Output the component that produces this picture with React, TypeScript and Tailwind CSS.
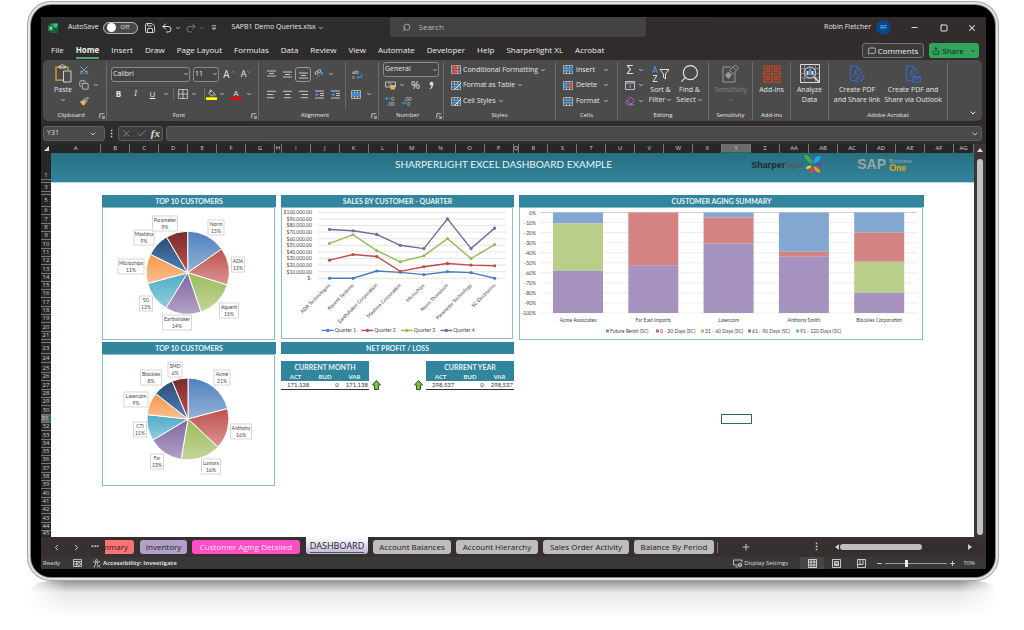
import type { ReactNode } from 'react';
import {
  AlignCenter,
  AlignLeft,
  AlignRight,
  Check,
  ChevronDown,
  ChevronLeft,
  ChevronRight,
  Copy,
  Eraser,
  MessageSquare,
  Minus,
  Plus,
  Redo2,
  Save,
  Scissors,
  Search,
  Share,
  Square,
  Undo2,
  X,
} from 'lucide-react';

/* ---------- data ---------- */

const menu = [
  'File',
  'Home',
  'Insert',
  'Draw',
  'Page Layout',
  'Formulas',
  'Data',
  'Review',
  'View',
  'Automate',
  'Developer',
  'Help',
  'Sharperlight XL',
  'Acrobat',
];

const columns =
  'A B C D E F G H I J K L M N O P Q R S T U V W X Y Z AA AB AC AD AE AF AG'.split(
    ' '
  );

interface Slice {
  name: string;
  pct: string;
  value: number;
  x: number;
  y: number;
  w: number;
}

// x / y is the centre of the callout
const topCustomers: Slice[] = [
  { name: 'Norm', pct: '15%', value: 15.3, x: 216, y: 228, w: 16 },
  { name: 'ADA', pct: '15%', value: 14.5, x: 238, y: 265, w: 13 },
  { name: 'Aquent', pct: '15%', value: 15, x: 229, y: 311, w: 19 },
  { name: 'Earthshaker', pct: '14%', value: 14, x: 177, y: 323, w: 29 },
  { name: 'SG', pct: '12%', value: 12, x: 146, y: 304, w: 13 },
  { name: 'Microchips', pct: '11%', value: 11.5, x: 131, y: 267, w: 26 },
  { name: 'Mashina', pct: '9%', value: 9.2, x: 144, y: 238, w: 20 },
  { name: 'Parameter', pct: '9%', value: 8.5, x: 165, y: 224, w: 25 },
];

const topVendors: Slice[] = [
  { name: 'Acme', pct: '21%', value: 20.9, x: 222, y: 378, w: 16 },
  { name: 'Anthony', pct: '16%', value: 16.1, x: 241, y: 432, w: 21 },
  { name: 'Lumarx', pct: '16%', value: 15.7, x: 211, y: 467, w: 19 },
  { name: 'Far', pct: '13%', value: 13.7, x: 157, y: 462, w: 13 },
  { name: 'CTI', pct: '11%', value: 10.3, x: 140, y: 430, w: 13 },
  { name: 'Lasercom', pct: '9%', value: 8.9, x: 136, y: 400, w: 24 },
  { name: 'Blockies', pct: '8%', value: 8.1, x: 151, y: 378, w: 21 },
  { name: 'SMD', pct: '6%', value: 6.3, x: 175, y: 370, w: 14 },
];

const pieColors = [
  ['#4f81bd', '#95b3d7'],
  ['#c0504d', '#d99694'],
  ['#9bbb59', '#c3d69b'],
  ['#8064a2', '#b3a2c7'],
  ['#4bacc6', '#93cddd'],
  ['#f79646', '#fac090'],
  ['#2c4d75', '#4f81bd'],
  ['#772c2a', '#c0504d'],
];

const salesNames = [
  'ADA Technologies',
  'Aquent Systems',
  'Earthshaker Corporation',
  'Mashina Corporation',
  'Microchips',
  'Norm Thompson',
  'Parameter Technology',
  'SG Electronics',
];

const quarters = [
  { color: '#4a7ebb', data: [0, 0, 11, 9, 5.5, 10, 8.5, 0] },
  { color: '#be4b48', data: [27.5, 36, 33, 10.5, 17.5, 22.5, 20, 19] },
  { color: '#98b954', data: [53, 66, 42, 25, 34, 60, 30, 51] },
  { color: '#7d60a0', data: [74, 72, 66.5, 50, 45, 90, 45, 76] },
];

const BLUE = '#84a7d2';
const RED = '#d38381';
const GREEN = '#b9ce88';
const PURPLE = '#a592bf';

const aging = [
  {
    name: 'Acme Associates',
    parts: [
      [11, BLUE],
      [47, GREEN],
      [42, PURPLE],
    ],
  },
  {
    name: 'Far East Imports',
    parts: [
      [53, RED],
      [47, PURPLE],
    ],
  },
  {
    name: 'Lasercom',
    parts: [
      [5, BLUE],
      [26, RED],
      [69, PURPLE],
    ],
  },
  {
    name: 'Anthony Smith',
    parts: [
      [39, BLUE],
      [5, RED],
      [56, PURPLE],
    ],
  },
  {
    name: 'Blockies Corporation',
    parts: [
      [20, BLUE],
      [29, RED],
      [31, GREEN],
      [20, PURPLE],
    ],
  },
] as { name: string; parts: [number, string][] }[];

const agingLegend = [
  { label: 'Future Remit (SC)', color: '#6b96cb', x: 606 },
  { label: '0 - 30 Days (SC)', color: '#cc6664', x: 656 },
  { label: '31 - 60 Days (SC)', color: '#a9c56f', x: 701 },
  { label: '61 - 90 Days (SC)', color: '#9078b2', x: 748 },
  { label: '91 - 120 Days (SC)', color: '#63b8d2', x: 796 },
];

/* ---------- small pieces ---------- */

function Chev({ className = '' }: { className?: string }) {
  return (
    <span className={`flex shrink-0 items-center justify-center ${className}`}>
      <ChevronDown className="size-[6px]" strokeWidth={3} />
    </span>
  );
}

function Tool({
  label,
  className = 'w-4',
  children,
}: {
  label: string;
  className?: string;
  children: ReactNode;
}) {
  return (
    <button
      type="button"
      aria-label={label}
      className={`flex shrink-0 items-center justify-center ${className}`}
    >
      {children}
    </button>
  );
}

function Group({
  label,
  launcher,
  className,
  children,
}: {
  label: string;
  launcher?: boolean;
  className: string;
  children: ReactNode;
}) {
  return (
    <section className={`flex shrink-0 flex-col ${className}`}>
      <div className="flex h-[47px] border-r border-[#6c6c6c]">{children}</div>
      <div className="flex h-[11px] items-end border-r border-[#6c6c6c] text-[6px] leading-[9px]">
        <span className="flex-1 text-center whitespace-nowrap">{label}</span>
        {launcher && (
          <svg viewBox="0 0 8 8" className="mr-px mb-px size-[6px]">
            <path d="M1 7V1h6M3.5 3.5 7 7M7 4v3H4" fill="none" stroke="#ddd" />
          </svg>
        )}
      </div>
    </section>
  );
}

function BigButton({
  icon,
  lines,
  className,
  chevron,
}: {
  icon: ReactNode;
  lines: string[];
  className: string;
  chevron?: boolean;
}) {
  return (
    <button
      type="button"
      className={`flex shrink-0 flex-col items-center text-[7px] leading-[10px] whitespace-nowrap ${className}`}
    >
      <span className="flex h-[23px] items-center">{icon}</span>
      <span>{lines[0]}</span>
      <span className="flex h-[10px] items-center gap-px">
        {lines[1]}
        {chevron && <Chev />}
      </span>
    </button>
  );
}

function TableIcon({ kind }: { kind: string }) {
  return (
    <svg viewBox="0 0 20 18" className="h-[9px] w-[10px] shrink-0">
      <path
        d="M1 1h18v16H1zM1 6h18M1 12h18M7 1v16M13 1v16"
        fill="none"
        stroke="#c9c9c9"
        strokeWidth="1.5"
      />
      {kind === 'cond' && (
        <path d="M3 1h9v5H3zM6 7h7v4H6zM3 12h9v5H3z" fill="#e8403a" />
      )}
      {kind === 'format' && <path d="M7 6h12v3l-9 8H7z" fill="#2f8fdd" />}
      {kind === 'cell' && <path d="M4 5h12v4l-8 8H4z" fill="#2f8fdd" />}
      {(kind === 'format' || kind === 'cell') && (
        <path d="M19 5 9 15l-3 2" stroke="#eee" strokeWidth="2" fill="none" />
      )}
      {kind === 'insert' && (
        <path d="M7 5h13v8H7zM0 9l5-4v8z" fill="#2f8fdd" />
      )}
      {kind === 'delete' && <path d="M2 5h9v8H2z" fill="#2f8fdd" />}
      {kind === 'delete' && (
        <path d="m11 5 8 8m0-8-8 8" stroke="#e8403a" strokeWidth="2.5" />
      )}
      {kind === 'fmt' && <path d="M5 5h10v8H5z" fill="#2f8fdd" />}
      {kind === 'merge' && <path d="M2 6h16v6H2z" fill="#2f8fdd" />}
    </svg>
  );
}

function PdfIcon({ mail }: { mail?: boolean }) {
  return (
    <svg
      viewBox="0 0 20 22"
      className="h-[18px] w-4"
      fill="none"
      stroke="#3569c8"
      strokeWidth="1.3"
    >
      <path d="M9 19H3.5A1.5 1.5 0 0 1 2 17.5v-15A1.5 1.5 0 0 1 3.5 1H10l5 5v5M10 1v5h5" />
      <path d="M4.500 14c3-1 5-5 4-7-.8-1-2 1 0 3 1 1.300 2.500 2 4.500 2" />
      {mail ? (
        <path d="M10 14h9v7h-9zl4.5 4 4.5-4" />
      ) : (
        <path d="m12 20-1 .8a2 2 0 0 1-2.5-3l2-1.800a2 2 0 0 1 3 .3m.5-1.300 1.500-1.500a2 2 0 0 1 3 2.800l-2.300 2.200a2 2 0 0 1-2.700-.2" />
      )}
    </svg>
  );
}

/* ---------- title bar, menu, ribbon ---------- */

function TitleBar() {
  return (
    <header className="flex h-[21px] items-center text-[7px] text-[#e4e4e4]">
      <div className="flex flex-1 items-center">
        <svg viewBox="0 0 20 20" className="ml-[7px] size-[10px]">
          <path d="M5 1h14v18H5z" fill="#21a366" />
          <path d="M12 1h7v6h-7z" fill="#33c481" />
          <path d="M5 10h14v9H5z" fill="#185c37" />
          <path d="M0 5h11v11H0z" fill="#107c41" />
          <path d="m3 7.5 5 6m0-6-5 6" stroke="#fff" strokeWidth="1.8" />
        </svg>
        <label className="ml-[10px] flex items-center gap-1 whitespace-nowrap">
          AutoSave
          <input type="checkbox" className="peer sr-only" />
          <span className="flex h-3 w-[35px] items-center rounded-full border border-[#b9b9b9] bg-[#4a4a4a] pl-[3px] text-[6px]">
            <span className="mr-[5px] size-[9px] rounded-full bg-white" />
            Off
          </span>
        </label>
        <Tool label="Save" className="ml-[6px] w-3">
          <Save className="size-3" strokeWidth={1.75} />
        </Tool>
        <Tool label="Undo" className="ml-[5px] w-3">
          <Undo2 className="size-3" strokeWidth={2} />
        </Tool>
        <Chev className="w-[10px]" />
        <Tool label="Redo" className="ml-[2px] w-3 text-[#777]">
          <Redo2 className="size-3" strokeWidth={2} />
        </Tool>
        <Chev className="w-[10px] text-[#777]" />
        <svg
          viewBox="0 0 8 8"
          className="ml-1 size-[6px]"
          fill="none"
          stroke="#ddd"
        >
          <path d="M1 1h6M1.5 4 4 6.5 6.5 4z" />
        </svg>
        <span className="ml-[15px] whitespace-nowrap">
          SAPB1 Demo Queries.xlsx
        </span>
        <Chev className="ml-[2px]" />
      </div>
      <div className="mb-px ml-2 flex h-5 w-[256px] items-center rounded-b-[3px] bg-[#434343] pl-3">
        <Search
          className="size-[9px] -scale-x-100 text-[#bbb]"
          strokeWidth={2}
        />
        <input
          aria-label="Search"
          placeholder="Search"
          className="ml-2 min-w-0 flex-1 bg-transparent text-[8px] outline-none placeholder:text-[#b8b8b8]"
        />
      </div>
      <div className="flex flex-1 items-center justify-end">
        <span>Robin Fletcher</span>
        <span className="ml-[5px] flex size-[15px] items-center justify-center rounded-full bg-[#05498c] text-[6px] text-[#8fc0f0]">
          RF
        </span>
        <Tool label="Minimize" className="ml-[18px] w-[10px]">
          <Minus className="size-[9px]" strokeWidth={2.5} />
        </Tool>
        <Tool label="Restore" className="ml-5 w-[10px]">
          <Square className="size-2" strokeWidth={3} />
        </Tool>
        <Tool label="Close" className="mr-[9px] ml-[18px] w-[10px]">
          <X className="size-[10px]" strokeWidth={2.5} />
        </Tool>
      </div>
    </header>
  );
}

function MenuBar() {
  return (
    <nav className="flex h-[22px] items-center pr-[7px] pl-[10px] text-[8px] text-[#ececec]">
      <div className="flex flex-1 gap-3 pt-1 whitespace-nowrap">
        {menu.map((item) => (
          <a
            key={item}
            href="#"
            className={
              item === 'Home'
                ? 'border-b-2 border-[#4fa573] leading-[14px] font-bold'
                : 'border-b-2 border-transparent leading-[14px]'
            }
          >
            {item}
          </a>
        ))}
      </div>
      <button
        type="button"
        className="mt-[3px] flex h-[15px] w-[62px] items-center justify-center gap-[2px] rounded-[3px] border border-[#747474] bg-[#3c3c3c]"
      >
        <MessageSquare className="size-2" />
        Comments
      </button>
      <button
        type="button"
        className="mt-[3px] ml-[5px] flex h-[15px] w-[50px] items-center justify-center gap-[2px] rounded-[3px] bg-[#33a45c] text-[#0c2415]"
      >
        <Share className="size-2" />
        Share
        <Chev className="ml-1" />
      </button>
    </nav>
  );
}

const lines = (d: string) => (
  <svg
    viewBox="0 0 18 18"
    className="size-[9px]"
    stroke="#d2d2d2"
    strokeWidth="1.8"
  >
    <path d={d} />
  </svg>
);

const indent = (d: string) => (
  <svg
    viewBox="0 0 18 18"
    className="size-[9px]"
    fill="none"
    strokeWidth="1.8"
  >
    <path d="M0 2h18M10 7h8M10 11h8M0 16h18" stroke="#d2d2d2" />
    <path d={d} stroke="#3d9be9" />
  </svg>
);

function Ribbon() {
  return (
    <div className="mr-1 ml-[2px] flex h-[61px] overflow-hidden rounded-[5px] bg-[#4b4b4b] pt-[2px] text-[7px] text-[#e6e6e6]">
      <Group label="Clipboard" launcher className="w-16">
        <BigButton
          className="ml-1 w-8"
          lines={['Paste', '']}
          chevron
          icon={
            <svg
              viewBox="0 0 34 38"
              className="h-[19px] w-[17px]"
              fill="none"
              strokeWidth="2.5"
            >
              <path d="M16 32H2V6h24v6" stroke="#e8a33d" />
              <path
                d="M8 8V4h4c0-4 5-4 5 0h4v4z"
                stroke="#cfcfcf"
                strokeWidth="2"
              />
              <path
                d="M17 14h15v22H17z"
                fill="#4b4b4b"
                stroke="#cfcfcf"
                strokeWidth="2"
              />
            </svg>
          }
        />
        <div className="grid grid-rows-3">
          <Tool label="Cut" className="w-[10px]">
            <Scissors
              className="size-[10px] -rotate-90 text-[#8cc3ee]"
              strokeWidth={1.75}
            />
          </Tool>
          <div className="flex">
            <Tool label="Copy" className="w-[10px]">
              <Copy className="size-[10px]" strokeWidth={1.75} />
            </Tool>
            <Chev className="w-[14px]" />
          </div>
          <Tool label="Format Painter" className="w-[10px]">
            <svg viewBox="0 0 20 20" className="size-[10px]">
              <path d="m2 11 7-3 5 5-4 6c-4-1-6-4-8-8z" fill="#e9b45c" />
              <path
                d="m9 7 5-2 3-3 2 2-3 3-1 5z"
                fill="#4b4b4b"
                stroke="#ddd"
                strokeWidth="1.5"
              />
            </svg>
          </Tool>
        </div>
      </Group>

      <Group label="Font" launcher className="w-[152px]">
        <div>
          <div className="flex h-6 items-center pl-1">
            <div className="relative w-[79px]">
              <select
                aria-label="Font name"
                className="h-[15px] w-full appearance-none rounded-[3px] border border-[#8a8a8a] bg-[#454545] px-px text-[7px]"
              >
                <option>Calibri</option>
              </select>
              <Chev className="pointer-events-none absolute inset-y-0 right-px" />
            </div>
            <div className="relative ml-[3px] w-[26px]">
              <select
                aria-label="Font size"
                className="h-[15px] w-full appearance-none rounded-[3px] border border-[#8a8a8a] bg-[#454545] px-px text-[7px]"
              >
                <option>11</option>
              </select>
              <Chev className="pointer-events-none absolute inset-y-0 right-px" />
            </div>
            <Tool label="Increase font size" className="ml-[2px] w-[17px] text-[10px]">
              A
              <Chev className="mb-1 rotate-180 text-[#3d9be9]" />
            </Tool>
            <Tool label="Decrease font size" className="w-[17px] text-[9px]">
              A
              <Chev className="mb-1 text-[#3d9be9]" />
            </Tool>
          </div>
          <div className="flex h-4 items-center pl-[3px]">
            <Tool label="Bold" className="w-[17px] text-[8px] font-bold">
              B
            </Tool>
            <Tool label="Italic" className="w-[17px] font-serif text-[8px] italic">
              I
            </Tool>
            <Tool label="Underline" className="w-[17px] text-[8px] underline">
              U
            </Tool>
            <Chev className="w-[9px]" />
            <span className="mx-[3px] h-3 w-px bg-[#6c6c6c]" />
            <Tool label="Borders" className="w-[11px]">
              <svg
                viewBox="0 0 18 18"
                className="size-[10px]"
                fill="none"
                stroke="#ccc"
                strokeWidth="1.6"
              >
                <path d="M1 1h16v16H1zM9 1v16M1 9h16" />
              </svg>
            </Tool>
            <Chev className="w-3" />
            <span className="ml-1 h-3 w-px bg-[#6c6c6c]" />
            <Tool label="Fill colour" className="w-3">
              <svg viewBox="0 0 20 20" className="size-[11px]">
                <path
                  d="m9 2 7 7-5 4-6-5zM8 1v5"
                  fill="none"
                  stroke="#ddd"
                  strokeWidth="1.5"
                />
                <path d="M17 8c2 3 2 5 0 5s-1-2 0-5z" fill="#3d9be9" />
                <path d="M0 15h20v5H0z" fill="#ffff00" />
              </svg>
            </Tool>
            <Chev className="w-[10px]" />
            <Tool label="Font colour" className="w-[18px]">
              <span className="border-b-[3px] border-[#f00] px-[2px] text-[8px] leading-2">
                A
              </span>
            </Tool>
            <Chev className="w-2" />
          </div>
        </div>
      </Group>

      <Group label="Alignment" launcher className="w-[120px]">
        <div className="pl-1">
          <div className="flex h-6 items-center">
            <Tool label="Top align">{lines('M0 2h18M4 7h10M0 12h18')}</Tool>
            <Tool label="Middle align">{lines('M0 4h18M4 9h10M0 14h18')}</Tool>
            <Tool
              label="Bottom align"
              className="h-[15px] w-4 rounded-[3px] border border-[#999]"
            >
              {lines('M0 6h18M4 11h10M0 16h18')}
            </Tool>
            <Tool label="Orientation">
              <svg
                viewBox="0 0 20 20"
                className="size-[10px]"
                fill="none"
                strokeWidth="1.8"
              >
                <circle cx="5" cy="8" r="3" stroke="#ccc" />
                <circle cx="11" cy="4" r="3" stroke="#ccc" />
                <path d="M5 18 17 7m-5 0h5v5" stroke="#3d9be9" />
              </svg>
            </Tool>
            <Chev className="w-2" />
          </div>
          <div className="flex h-4 items-center">
            <Tool label="Align left">
              <AlignLeft className="size-[11px]" strokeWidth={1.75} />
            </Tool>
            <Tool label="Center">
              <AlignCenter className="size-[11px]" strokeWidth={1.75} />
            </Tool>
            <Tool label="Align right">
              <AlignRight className="size-[11px]" strokeWidth={1.75} />
            </Tool>
            <Tool label="Decrease indent">{indent('M8 9H1m3-3L1 9l3 3')}</Tool>
            <Tool label="Increase indent">{indent('M0 9h7M4 6l3 3-3 3')}</Tool>
          </div>
        </div>
        <div className="ml-[2px] border-l border-[#6c6c6c]">
          <div className="flex h-6 items-center">
            <Tool label="Wrap text" className="w-[22px]">
              <svg viewBox="0 0 20 20" className="size-[11px]">
                <text x="0" y="9" fontSize="11" fill="#ddd">
                  ab
                </text>
                <text x="0" y="19" fontSize="11" fill="#ddd">
                  c
                </text>
                <path
                  d="M18 9v6h-9m3-3-3 3 3 3"
                  fill="none"
                  stroke="#3d9be9"
                  strokeWidth="1.8"
                />
              </svg>
            </Tool>
          </div>
          <div className="flex h-4 items-center">
            <Tool label="Merge" className="w-5">
              <TableIcon kind="merge" />
            </Tool>
            <Chev className="w-[6px]" />
          </div>
        </div>
      </Group>

      <Group label="Number" launcher className="w-[65px]">
        <div className="grid grid-rows-3 pl-1">
          <div className="relative w-14">
            <select
              aria-label="Number format"
              className="h-[15px] w-full appearance-none rounded-[3px] border border-[#8a8a8a] bg-[#454545] px-px text-[7px]"
            >
              <option>General</option>
            </select>
            <Chev className="pointer-events-none absolute inset-y-0 right-px" />
          </div>
          <div className="flex">
            <Tool label="Accounting format" className="w-[14px]">
              <svg viewBox="0 0 22 18" className="h-[9px] w-[11px]">
                <path
                  d="M1 2h20v10H1z"
                  fill="none"
                  stroke="#ccc"
                  strokeWidth="1.8"
                />
                <circle cx="10" cy="7" r="3" fill="none" stroke="#ccc" />
                <path d="M11 8h9v9h-9z" fill="#e9b45c" />
              </svg>
            </Tool>
            <Chev className="w-[10px]" />
            <Tool label="Percent" className="w-[17px] text-[11px]">
              %
            </Tool>
            <Tool label="Comma" className="w-[15px]">
              <svg viewBox="0 0 8 14" className="h-[9px] w-[5px]" fill="#ddd">
                <path d="M4 1a3 3 0 0 1 3 3c0 4-2 7-5 9l-1-1c2-2 3-3 3-5a3 3 0 1 1 0-6z" />
              </svg>
            </Tool>
          </div>
          <div className="flex">
            {['Increase decimal', 'Decrease decimal'].map((label, i) => (
              <Tool
                key={label}
                label={label}
                className={i ? 'ml-[2px] w-[14px]' : 'w-[14px]'}
              >
                <svg
                  viewBox="0 0 22 20"
                  className="h-[10px] w-[11px]"
                  fontSize="11"
                >
                  <text x={i ? 6 : 12} y="9" fill="#ddd">
                    {i ? '.00' : '0'}
                  </text>
                  <text x={i ? 12 : 4} y="19" fill="#ddd">
                    {i ? '0' : '.00'}
                  </text>
                  <path
                    d={i ? 'M1 14h9M7 11l3 3-3 3' : 'M10 5H1m3-3L1 5l3 3'}
                    fill="none"
                    stroke="#3d9be9"
                    strokeWidth="1.8"
                  />
                </svg>
              </Tool>
            ))}
          </div>
        </div>
      </Group>

      <Group label="Styles" className="w-28">
        <div className="grid grid-rows-3 pl-[7px]">
          {[
            ['cond', 'Conditional Formatting'],
            ['format', 'Format as Table'],
            ['cell', 'Cell Styles'],
          ].map(([kind, text]) => (
            <button
              key={kind}
              type="button"
              className="flex items-center gap-[2px] whitespace-nowrap"
            >
              <TableIcon kind={kind} />
              {text}
              <Chev />
            </button>
          ))}
        </div>
      </Group>

      <Group label="Cells" className="w-[62px]">
        <div className="grid grid-rows-3 pl-[7px]">
          {[
            ['insert', 'Insert'],
            ['delete', 'Delete'],
            ['fmt', 'Format'],
          ].map(([kind, text]) => (
            <button
              key={kind}
              type="button"
              className="flex items-center gap-[3px]"
            >
              <TableIcon kind={kind} />
              <span className="flex-1 text-left">{text}</span>
              <Chev />
            </button>
          ))}
        </div>
      </Group>

      <Group label="Editing" className="w-[91px]">
        <div className="grid grid-rows-3 pl-[6px]">
          <div className="flex">
            <Tool label="AutoSum" className="w-3 text-[12px] leading-3">
              Σ
            </Tool>
            <Chev className="w-[10px]" />
          </div>
          <div className="flex">
            <Tool label="Fill" className="w-3">
              <svg
                viewBox="0 0 20 18"
                className="h-[9px] w-[10px]"
                fill="none"
                strokeWidth="1.8"
              >
                <path d="M1 1h18v16H1zM1 4h18" stroke="#ccc" />
                <path d="M10 6v8m-3-3 3 3 3-3" stroke="#3d9be9" />
              </svg>
            </Tool>
            <Chev className="w-[10px]" />
          </div>
          <div className="flex">
            <Tool label="Clear" className="w-3">
              <Eraser className="size-[10px] text-[#cf6fd8]" />
            </Tool>
            <Chev className="w-[10px]" />
          </div>
        </div>
        <BigButton
          className="w-[29px]"
          lines={['Sort &', 'Filter']}
          chevron
          icon={
            <svg
              viewBox="0 0 36 32"
              className="h-4 w-[18px]"
              fill="none"
              strokeWidth="2"
            >
              <path d="m1 14 5-13 5 13M3 10h6" stroke="#3d9be9" />
              <path d="M2 19h8L2 31h9" stroke="#ddd" />
              <path d="M16 7h18l-7 9v10l-4-3v-7z" stroke="#ddd" />
            </svg>
          }
        />
        <BigButton
          className="w-[29px]"
          lines={['Find &', 'Select']}
          chevron
          icon={
            <Search className="size-[21px] -scale-x-100" strokeWidth={1.25} />
          }
        />
      </Group>

      <Group label="Sensitivity" className="w-11">
        <BigButton
          className="flex-1 text-[#858585]"
          lines={['Sensitivity', '']}
          chevron
          icon={
            <svg
              viewBox="0 0 34 38"
              className="h-[19px] w-[17px]"
              fill="none"
              stroke="#999"
              strokeWidth="2"
            >
              <path d="M18 6H2v30h24V18" />
              <path d="m7 22 6-6 6 6-6 7z" fill="#999" />
              <path d="m15 13 7-7 7 7-6 7zM22 6l5-4 6 6-4 5" />
            </svg>
          }
        />
      </Group>

      <Group label="Add-ins" className="w-[38px]">
        <BigButton
          className="flex-1"
          lines={['Add-ins', '']}
          icon={
            <svg
              viewBox="0 0 36 36"
              className="size-[18px]"
              fill="none"
              stroke="#c8471f"
              strokeWidth="2.5"
            >
              <path d="M2 2h32v32H2zM2 18h32M18 2v32" />
              <path d="M7 7h6v6H7zM23 7h6v6h-6zM7 23h6v6H7zM23 23h6v6h-6z" />
            </svg>
          }
        />
      </Group>

      <Group label="" className="w-[38px]">
        <BigButton
          className="flex-1"
          lines={['Analyze', 'Data']}
          icon={
            <svg
              viewBox="0 0 40 38"
              className="h-[19px] w-5"
              fill="none"
              stroke="#ddd"
              strokeWidth="2"
            >
              <path d="M1 1h38v36H1z" />
              <path
                d="M1 9h38M1 19h38M1 28h38M9 1v36M31 1v36"
                stroke="#999"
                strokeWidth="1.5"
              />
              <circle cx="20" cy="17" r="11" fill="#4b4b4b" />
              <path d="m28 26 10 10" strokeWidth="3" />
              <path d="M13 14h4v8h-4zM23 14h4v8h-4z" fill="#ddd" stroke="none" />
              <path d="M18 9h5v13h-5z" fill="#3d9be9" stroke="none" />
            </svg>
          }
        />
      </Group>

      <Group label="Adobe Acrobat" className="w-[119px]">
        <BigButton
          className="w-14"
          lines={['Create PDF', 'and Share link']}
          icon={<PdfIcon />}
        />
        <BigButton
          className="w-14"
          lines={['Create PDF and', 'Share via Outlook']}
          icon={<PdfIcon mail />}
        />
      </Group>

      <button
        type="button"
        aria-label="Collapse ribbon"
        className="mt-auto mr-[5px] mb-1 ml-auto"
      >
        <ChevronDown className="size-2" strokeWidth={3} />
      </button>
    </div>
  );
}

function FormulaBar() {
  return (
    <div className="mt-[5px] mr-1 ml-[2px] flex h-[15px] text-[7px] text-[#ddd]">
      <div className="flex w-[62px] items-center rounded-[3px] border border-[#5e5e5e] bg-[#4a4a4a]">
        <input
          aria-label="Name box"
          defaultValue="Y31"
          className="w-10 flex-1 bg-transparent pl-[3px] outline-none"
        />
        <ChevronDown className="mr-[7px] size-2" strokeWidth={2.5} />
      </div>
      <span className="w-[13px] text-center text-[9px] leading-[15px] font-bold">
        ⋮
      </span>
      <div className="flex w-[45px] items-center justify-around rounded-[3px] border border-[#5e5e5e] bg-[#3c3c3c]">
        <X className="size-[11px] text-[#888]" />
        <Check className="size-[11px] text-[#888]" />
        <span className="font-['Liberation_Serif',serif] text-[11px] font-bold italic">
          fx
        </span>
      </div>
      <div className="ml-[3px] flex flex-1 items-center rounded-[3px] border border-[#5e5e5e] bg-[#4a4a4a] pr-[2px]">
        <input
          aria-label="Formula"
          className="flex-1 bg-transparent px-1 outline-none"
        />
        <ChevronDown className="size-2" strokeWidth={2.5} />
      </div>
    </div>
  );
}

/* ---------- sheet ---------- */

function ColumnHeads() {
  return (
    <div className="flex h-[9px] bg-[#272727] text-[6px] leading-[9px] text-[#cfcfcf]">
      <span className="flex w-[10px] items-end justify-end p-[2px]">
        <svg viewBox="0 0 6 6" className="size-[5px]" fill="#ddd">
          <path d="M6 0v6H0z" />
        </svg>
      </span>
      {columns.map((c) => {
        let size = 'flex-[29_1_0px]';
        if (c === 'A') size = 'flex-[51_1_0px]';
        if (c === 'H') size = 'flex-[6_1_0px]';
        if (c === 'Q') size = 'flex-[5_1_0px]';
        if (c === 'AG') size = 'flex-[20_1_0px]';
        return (
          <span
            key={c}
            className={`flex min-w-0 justify-center border-r ${size} ${
              c === 'Y'
                ? 'border-b border-r-[#777] border-b-[#217346] bg-[#6b6b6b]'
                : 'border-[#777]'
            }`}
          >
            {c}
          </span>
        );
      })}
    </div>
  );
}

function RowHead({ n, className }: { n: number; className: string }) {
  return (
    <div
      className={`flex min-h-0 items-end justify-center overflow-hidden border-b border-[#777] leading-[7px] ${className} ${
        n === 31 ? 'border-r-2 border-r-[#217346] bg-[#6b6b6b]' : ''
      }`}
    >
      {n}
    </div>
  );
}

function RowHeads() {
  const range = (from: number, to: number) =>
    Array.from({ length: to - from + 1 }, (_, i) => from + i);
  return (
    <div className="flex w-[10px] shrink-0 flex-col bg-[#272727] text-[6px] text-[#cfcfcf]">
      <RowHead n={1} className="h-[27px]" />
      <RowHead n={2} className="h-[3px]" />
      <RowHead n={3} className="h-[9px]" />
      <RowHead n={4} className="h-[3px]" />
      <RowHead n={5} className="h-3 pb-[2px]" />
      <div className="flex h-[133px] flex-col">
        {range(6, 21).map((n) => (
          <RowHead key={n} n={n} className="flex-1" />
        ))}
      </div>
      <RowHead n={22} className="h-[3px]" />
      <RowHead n={23} className="h-[11px] pb-px" />
      <RowHead n={24} className="h-[9px]" />
      <RowHead n={25} className="h-[10px]" />
      <div className="flex h-[158px] flex-col">
        {range(26, 44).map((n) => (
          <RowHead key={n} n={n} className="flex-1" />
        ))}
      </div>
      <RowHead n={45} className="h-[6px] border-b-0" />
    </div>
  );
}

// charts are drawn in sheet coordinates, the viewBox picks the card out
function Pie({
  id,
  slices,
  cx,
  cy,
  r,
  viewBox,
}: {
  id: string;
  slices: Slice[];
  cx: number;
  cy: number;
  r: number;
  viewBox: string;
}) {
  let sum = 0;
  const point = (value: number) => {
    const a = (value / 100) * Math.PI * 2;
    return [cx + r * Math.sin(a), cy - r * Math.cos(a)];
  };
  return (
    <svg
      viewBox={viewBox}
      className="block w-full"
      role="img"
      aria-label="Top 10 customers"
    >
      <defs>
        {pieColors.map(([from, to], i) => (
          <linearGradient key={from} id={`${id}${i}`} x2="0" y2="1">
            <stop stopColor={from} />
            <stop offset="1" stopColor={to} />
          </linearGradient>
        ))}
      </defs>
      {slices.map((s, i) => {
        const [x1, y1] = point(sum);
        const [mx, my] = point(sum + s.value / 2);
        sum += s.value;
        const [x2, y2] = point(sum);
        return (
          <g key={s.name}>
            <path
              d={`M${cx} ${cy}L${x1} ${y1}A${r} ${r} 0 0 1 ${x2} ${y2}Z`}
              fill={`url(#${id}${i})`}
              stroke="#fff"
            />
            <path
              d={`M${s.x} ${s.y}L${mx} ${my}`}
              stroke="#ccc"
              strokeWidth=".5"
            />
          </g>
        );
      })}
      {slices.map((s) => (
        <g key={s.name} textAnchor="middle" fontSize="5" fill="#444">
          <rect
            x={s.x - s.w / 2}
            y={s.y - 8}
            width={s.w}
            height="15"
            fill="#fff"
            stroke="#ccc"
            strokeWidth=".8"
          />
          <text x={s.x} y={s.y - 2}>
            {s.name}
          </text>
          <text x={s.x} y={s.y + 5}>
            {s.pct}
          </text>
        </g>
      ))}
    </svg>
  );
}

function SalesChart() {
  const px = (i: number) => 329.7 + i * 23.7;
  const py = (v: number) => 278.6 - v * 0.663;
  return (
    <svg
      viewBox="282 208 231 131"
      className="block w-full"
      fontSize="5"
      fill="#444"
      role="img"
      aria-label="Sales by customer"
    >
      {Array.from({ length: 11 }, (_, i) => (
        <g key={i}>
          <path
            d={`M318 ${py(i * 10)}h189`}
            stroke="#d9d9d9"
            strokeWidth=".7"
          />
          <text x="312" y={py(i * 10) + 2} textAnchor="end">
            {i ? `$${i * 10},000.00` : '$-'}
          </text>
        </g>
      ))}
      {salesNames.map((name, i) => (
        <text
          key={name}
          textAnchor="end"
          transform={`translate(${px(i) + 1} 286) rotate(-45)`}
        >
          {name}
        </text>
      ))}
      {quarters.map((q, qi) => (
        <g key={q.color}>
          <polyline
            points={q.data.map((v, i) => `${px(i)},${py(v)}`).join(' ')}
            fill="none"
            stroke={q.color}
            strokeWidth="1.4"
          />
          {q.data.map((v, i) => (
            <circle key={i} cx={px(i)} cy={py(v)} r="1.6" fill={q.color} />
          ))}
          <path
            d={`M${322 + qi * 39.7} 331h12`}
            stroke={q.color}
            strokeWidth="1.4"
          />
          <circle cx={328 + qi * 39.7} cy="331" r="1.6" fill={q.color} />
          <text x={335 + qi * 39.7} y="333">
            Quarter {qi + 1}
          </text>
        </g>
      ))}
    </svg>
  );
}

function AgingChart() {
  return (
    <svg
      viewBox="520 208 402 131"
      className="block w-full"
      fontSize="5"
      fill="#444"
      role="img"
      aria-label="Customer aging"
    >
      {Array.from({ length: 11 }, (_, i) => (
        <g key={i}>
          <path
            d={`M540 ${212.5 + i * 10.05}h377`}
            stroke={i ? '#e6e6e6' : '#bbb'}
            strokeWidth=".7"
          />
          <text x="536" y={214.5 + i * 10.05} textAnchor="end">
            {i ? `-${i * 10}%` : '0%'}
          </text>
        </g>
      ))}
      {aging.map((bar, i) => {
        let top = 212.5;
        const x = 553 + i * 75.3;
        return (
          <g key={bar.name}>
            {bar.parts.map(([value, color]) => {
              const y = top;
              top += value * 1.005;
              return (
                <rect
                  key={color}
                  x={x}
                  y={y}
                  width="50"
                  height={value * 1.005}
                  fill={color}
                />
              );
            })}
            <text x={x + 25} y="322" textAnchor="middle">
              {bar.name}
            </text>
          </g>
        );
      })}
      {agingLegend.map((item) => (
        <g key={item.label}>
          <rect x={item.x} y="329.5" width="3" height="3" fill={item.color} />
          <text x={item.x + 4} y="333">
            {item.label}
          </text>
        </g>
      ))}
    </svg>
  );
}

function Card({ title, children }: { title: string; children: ReactNode }) {
  return (
    <section>
      <h2 className="bg-[#31859c] text-center text-[7px] leading-3 font-bold text-[#e8f3f5]">
        {title}
      </h2>
      <div className="mr-px border border-[#8dbdca]">{children}</div>
    </section>
  );
}

function ProfitTable({ title, value }: { title: string; value: string }) {
  return (
    <table className="w-[88px] table-fixed text-[6px] text-[#333]">
      <thead className="bg-[#31859c] text-[#e8f3f5]">
        <tr>
          <th colSpan={3} className="h-3 p-0 text-[7px] leading-3">
            {title}
          </th>
        </tr>
        <tr className="leading-2">
          <th className="p-0">ACT</th>
          <th className="p-0">BUD</th>
          <th className="p-0">VAR</th>
        </tr>
      </thead>
      <tbody>
        <tr className="border-b border-[#333] text-right leading-2">
          <td className="p-0 pr-px">{value}</td>
          <td className="p-0 pr-px">0</td>
          <td className="p-0 pr-px">{value}</td>
        </tr>
      </tbody>
    </table>
  );
}

function UpArrow() {
  return (
    <svg viewBox="0 0 18 20" className="mx-[3px] h-[10px] w-[9px] self-end">
      <path
        d="m9 1 8 9h-4v9H5v-9H1z"
        fill="#7cc142"
        stroke="#24593a"
        strokeWidth="2"
      />
    </svg>
  );
}

function Banner() {
  return (
    <div className="flex h-[30px] border-b border-[#b7d5dd] bg-linear-to-b from-[#2a6f80] to-[#31859c] pr-[18px]">
      <div className="flex-1" />
      <h1 className="pt-1 text-[10px] leading-[14px] whitespace-nowrap text-[#e6f2f5]">
        SHARPERLIGHT EXCEL DASHBOARD EXAMPLE
      </h1>
      <div className="flex flex-1 items-start justify-end">
        <span className="pt-[5px] font-['Liberation_Sans',sans-serif] text-[9px] leading-[14px] font-bold text-[#1c2b30]">
          Sharper<span className="text-[#4c5d63]">light</span>
        </span>
        <svg viewBox="0 0 40 42" className="mt-px h-[21px] w-5">
          <path d="M17 20C6 16-1 6 1 1c6-1 15 8 16 19z" fill="#3fae49" />
          <path d="M19 19c-1-8 6-17 14-15 2 6-5 13-14 15z" fill="#1ea7e1" />
          <path d="M20 22c5-4 14-5 19-1-4 4-12 4-19 1z" fill="#7a3f98" />
          <path d="M19 25c6 0 13 5 14 11-6 3-13-3-14-11z" fill="#f6921e" />
          <path d="M17 26c3 4 2 12-3 13-5-2-2-11 3-13z" fill="#ef4136" />
          <path d="M15 24c-2 5-8 7-11 5 0-4 6-6 11-5z" fill="#f9d423" />
        </svg>
        <span className="ml-[33px] font-['Liberation_Sans',sans-serif] text-[14px] leading-[22px] font-bold text-[#9aa5a9]">
          SAP
        </span>
        <span className="mr-[41px] ml-[3px] flex w-[26px] flex-col pt-1 text-[6px] leading-[7px] text-[#8fa6ac]">
          Business
          <b className="text-[9px] leading-2 text-[#f0ab00]">One</b>
        </span>
      </div>
    </div>
  );
}

function Sheet() {
  return (
    <main className="relative min-w-0 flex-1 bg-white font-['Lato',sans-serif]">
      <Banner />
      <div className="mt-3 grid grid-cols-[174fr_233fr_405fr] gap-x-[5px] gap-y-[2px] pr-[50px] pl-[51px]">
        <Card title="TOP 10 CUSTOMERS">
          <Pie
            id="a"
            slices={topCustomers}
            cx={187.7}
            cy={272.7}
            r={41.5}
            viewBox="103 208 171 131"
          />
        </Card>
        <Card title="SALES BY CUSTOMER - QUARTER">
          <SalesChart />
        </Card>
        <Card title="CUSTOMER AGING SUMMARY">
          <AgingChart />
        </Card>
        <Card title="TOP 10 CUSTOMERS">
          <Pie
            id="b"
            slices={topVendors}
            cx={188}
            cy={419}
            r={41}
            viewBox="103 355 171 130"
          />
        </Card>
        <section>
          <h2 className="bg-[#31859c] text-center text-[7px] leading-3 font-bold text-[#e8f3f5]">
            NET PROFIT / LOSS
          </h2>
          <div className="mt-[7px] flex">
            <ProfitTable title="CURRENT MONTH" value="171,138" />
            <UpArrow />
            <span className="flex-1" />
            <UpArrow />
            <ProfitTable title="CURRENT YEAR" value="298,537" />
          </div>
        </section>
      </div>
      {/* active cell Y31 */}
      <div className="absolute top-[261px] right-[222px] h-[10px] w-[31px] border border-[#217346]" />
    </main>
  );
}

/* ---------- bottom ---------- */

function SheetTabs() {
  const plain = 'h-[14px] rounded-[3px] bg-[#bdbdbd] text-[#222]';
  return (
    <div className="flex h-5 items-center bg-[#382f30] text-[8px] whitespace-nowrap text-[#ddd]">
      <Tool label="Previous" className="ml-[10px] w-[10px]">
        <ChevronLeft className="size-[9px]" strokeWidth={2.5} />
      </Tool>
      <Tool label="Next" className="ml-[10px] w-[10px]">
        <ChevronRight className="size-[9px]" strokeWidth={2.5} />
      </Tool>
      <Tool label="More sheets" className="ml-[9px] w-[10px] text-[7px]">
        •••
      </Tool>
      <button
        type="button"
        className="ml-[5px] flex h-[14px] w-[29px] items-center justify-end overflow-hidden rounded-r-[3px] bg-[#fb7474] pr-[6px] text-[#3a1a1a]"
      >
        mmary
      </button>
      <button
        type="button"
        className="ml-[6px] h-[14px] w-[47px] rounded-[3px] bg-[#b1a0c7] text-[#222]"
      >
        Inventory
      </button>
      <button
        type="button"
        className="ml-[5px] h-[14px] w-[108px] rounded-[3px] bg-[#ff4fc3] text-[#ffe3f6]"
      >
        Customer Aging Detailed
      </button>
      <button
        type="button"
        className="ml-[6px] h-[17px] w-[62px] self-start rounded-b-[3px] bg-linear-to-b from-white to-[#c6b2da] text-[9px] text-[#222]"
      >
        <span className="inline-block border-b border-[#217346] leading-3">
          DASHBOARD
        </span>
      </button>
      <button type="button" className={`ml-[5px] w-[78px] ${plain}`}>
        Account Balances
      </button>
      <button type="button" className={`ml-[5px] w-[82px] ${plain}`}>
        Account Hierarchy
      </button>
      <button type="button" className={`ml-[5px] w-[86px] ${plain}`}>
        Sales Order Activity
      </button>
      <button type="button" className={`ml-[5px] w-[80px] ${plain}`}>
        Balance By Period
      </button>
      <span className="ml-[3px] h-[11px] w-px bg-[#777]" />
      <Tool label="New sheet" className="ml-[23px] w-[10px]">
        <Plus className="size-[10px]" />
      </Tool>
      <span className="mr-[10px] ml-auto text-[9px] font-bold">⋮</span>
      <div className="mr-[10px] flex h-[9px] w-[145px] items-center rounded-full bg-[#332d2d] px-[3px]">
        <svg viewBox="0 0 6 6" className="size-[6px]" fill="#ccc">
          <path d="M5 0v6L1 3z" />
        </svg>
        <span className="h-[6px] w-[82px] rounded-full bg-[#bdbdbd]" />
        <svg viewBox="0 0 6 6" className="ml-auto size-[6px]" fill="#ccc">
          <path d="M1 0v6l4-3z" />
        </svg>
      </div>
    </div>
  );
}

function StatusBar() {
  return (
    <footer className="flex h-3 items-center bg-[#383838] text-[6px] whitespace-nowrap text-[#ddd]">
      <span className="ml-[2px] w-[30px]">Ready</span>
      <svg
        viewBox="0 0 18 16"
        className="h-2 w-[9px]"
        fill="none"
        stroke="#ddd"
        strokeWidth="1.5"
      >
        <path d="M1 1h16v14H1zM1 5h16M7 5v10M1 10h8" />
        <circle cx="12" cy="10" r="3" />
      </svg>
      <svg
        viewBox="0 0 18 18"
        className="ml-[10px] size-[9px]"
        fill="none"
        stroke="#ddd"
        strokeWidth="1.6"
      >
        <circle cx="9" cy="3" r="2" />
        <path d="M2 5c5 2 9 2 14 0M7 7v4l-3 6M11 7v3M10 11l6 6m0-6-6 6" />
      </svg>
      <b className="ml-[2px]">Accessibility: Investigate</b>
      <svg
        viewBox="0 0 20 18"
        className="ml-auto h-[9px] w-[10px]"
        fill="none"
        stroke="#ddd"
        strokeWidth="1.6"
      >
        <path d="M9 12H1V2h17v5M5 16h5" />
        <circle cx="14" cy="12" r="3.5" />
        <circle cx="14" cy="12" r="1" />
      </svg>
      <span className="ml-px w-[56px]">Display Settings</span>
      <Tool label="Normal view" className="h-3 w-6 bg-[#454545]">
        <svg
          viewBox="0 0 18 18"
          className="size-[9px]"
          fill="none"
          stroke="#eee"
          strokeWidth="1.6"
        >
          <path d="M1 1h16v16H1zM1 6h16M1 12h16M6 1v16M12 1v16" />
        </svg>
      </Tool>
      <Tool label="Page layout" className="w-[25px]">
        <svg
          viewBox="0 0 18 18"
          className="size-[9px]"
          fill="none"
          stroke="#eee"
          strokeWidth="1.6"
        >
          <path d="M1 1h16v16H1zM5 5h8v8H5zM5 8h8M5 11h8" />
        </svg>
      </Tool>
      <Tool label="Page break preview" className="w-[25px]">
        <svg
          viewBox="0 0 18 18"
          className="size-[9px]"
          fill="none"
          stroke="#eee"
          strokeWidth="1.6"
        >
          <path d="M1 1h16v16H1zM6 1v10H1M6 11h6V1" />
        </svg>
      </Tool>
      <Minus className="ml-[2px] size-[7px]" strokeWidth={3} />
      <input
        type="range"
        aria-label="Zoom"
        min={0}
        max={100}
        defaultValue={34}
        className="mx-[2px] h-2 w-[62px] appearance-none bg-[linear-gradient(#999,#999)] bg-size-[100%_1px] bg-center bg-no-repeat [&::-webkit-slider-thumb]:h-[7px] [&::-webkit-slider-thumb]:w-[3px] [&::-webkit-slider-thumb]:appearance-none [&::-webkit-slider-thumb]:bg-[#eee]"
      />
      <Plus className="size-[7px]" strokeWidth={3} />
      <span className="mr-[11px] ml-[7px]">70%</span>
    </footer>
  );
}

export default function App() {
  return (
    <div className="min-h-screen overflow-hidden bg-white pt-[5px] pr-[29px] pl-[31px] font-['Open_Sans',sans-serif]">
      {/* monitor frame */}
      <div className="rounded-[20px] bg-black pt-3 pr-[9px] pb-2 pl-[10px] shadow-[0_0_0_1px_#8a8a8a,0_0_0_3px_#e6e6e6,0_0_0_4px_#a5a5a5]">
        <div className="bg-linear-to-r from-[#2c2c2c] to-[#332c2c]">
          <TitleBar />
          <MenuBar />
          <Ribbon />
          <FormulaBar />
          <div className="mt-[3px] flex">
            <div className="min-w-0 flex-1">
              <ColumnHeads />
              <div className="flex">
                <RowHeads />
                <Sheet />
              </div>
            </div>
            <div className="flex w-3 flex-col items-center bg-[#3a3636] pt-[3px] pb-[2px]">
              <svg viewBox="0 0 6 6" className="size-[6px]" fill="#ddd">
                <path d="M0 5h6L3 1z" />
              </svg>
              <span className="mt-[6px] w-[6px] flex-1 rounded-full bg-[#c4c4c4]" />
            </div>
          </div>
          <SheetTabs />
          <StatusBar />
        </div>
      </div>
      {/* reflection on the desk */}
      <div className="mx-[-4px] mt-1 h-[46px] rounded-t-[20px] bg-linear-to-b from-[#979797] via-[#e9e9e9] via-25% to-white to-80% mask-[linear-gradient(to_right,transparent,black_4%,black_96%,transparent)]" />
    </div>
  );
}
